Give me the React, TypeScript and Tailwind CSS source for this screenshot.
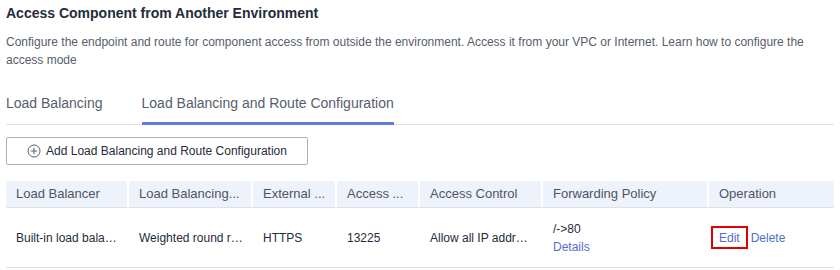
import { useState } from "react";

interface Row {
    balancer: string
    algorithm: string
    protocol: string
    port: string
    control: string
    policy: string
}

const columns = [
    { label: "Load Balancer", width: "w-[123px]" },
    { label: "Load Balancing...", width: "w-[124px]" },
    { label: "External ...", width: "w-[84px]" },
    { label: "Access ...", width: "w-[83px]" },
    { label: "Access Control", width: "w-[123px]" },
    { label: "Forwarding Policy", width: "w-[166px]" },
    { label: "Operation", width: "flex-1" },
];

const rows: Row[] = [
    {
        balancer: "Built-in load bala…",
        algorithm: "Weighted round r…",
        protocol: "HTTPS",
        port: "13225",
        control: "Allow all IP addr…",
        policy: "/->80",
    },
];

function PlusCircle() {
    return (
        <svg width="14" height="14" viewBox="0 0 14 14" fill="none" stroke="#575d6c" strokeWidth="1">
            <circle cx="7" cy="7" r="6" />
            <path d="M7 3.8v6.4M3.8 7h6.4" />
        </svg>
    );
}

export default function App() {
    const [tab, setTab] = useState(1);
    const tabs = ["Load Balancing", "Load Balancing and Route Configuration"];

    return (
        <div className="w-[840px] h-[270px] bg-white px-[6px] pt-[4px] font-['Liberation_Sans',Arial,sans-serif]">
            <h2 className="text-[14px] leading-[18px] font-bold text-[#252b3a]">
                Access Component from Another Environment
            </h2>
            <p className="mt-[11px] text-[12px] leading-[18px] text-[#575d6c] pr-[20px]">
                Configure the endpoint and route for component access from outside the environment. Access it from your VPC or Internet. Learn how to configure the access mode
            </p>

            <div className="mt-[25px] flex gap-[39px] border-b border-[#dfe1e6] w-[828px]">
                {tabs.map((t, i) => (
                    <button
                        key={t}
                        onClick={() => setTab(i)}
                        className={
                            "h-[31px] text-[14px] leading-[18px] text-[#575d6c] -mb-px pb-[10px] border-b-[3px] " +
                            (tab === i ? "border-[#5e7ce0]" : "border-transparent")
                        }
                    >
                        {t}
                    </button>
                ))}
            </div>

            <button className="mt-[12px] h-[28px] w-[302px] flex items-center justify-center gap-[5px] border border-[#adb0b8] rounded-[2px] text-[12px] text-[#252b3a]">
                <PlusCircle />
                Add Load Balancing and Route Configuration
            </button>

            <div className="mt-[16px] w-[828px]">
                <div className="flex h-[27px] bg-[#eef2fa] border-b border-[#dfe1e6]">
                    {columns.map((c, i) => (
                        <div
                            key={c.label}
                            className={
                                c.width +
                                " flex items-center px-[10px] whitespace-nowrap overflow-hidden text-[13px] text-[#4f5563] " +
                                (i < columns.length - 1 ? "border-r-2 border-white" : "")
                            }
                        >
                            {c.label}
                        </div>
                    ))}
                </div>
                {rows.map((r) => (
                    <div key={r.balancer} className="flex h-[60px] items-center border-b border-[#dfe1e6] text-[12px] text-[#252b3a] whitespace-nowrap">
                        <div className="w-[123px] px-[10px]">{r.balancer}</div>
                        <div className="w-[124px] px-[10px]">{r.algorithm}</div>
                        <div className="w-[84px] px-[10px]">{r.protocol}</div>
                        <div className="w-[83px] px-[10px]">{r.port}</div>
                        <div className="w-[123px] px-[10px]">{r.control}</div>
                        <div className="w-[166px] px-[10px] leading-[18px]">
                            <div>{r.policy}</div>
                            <div className="text-[#526ecc]">Details</div>
                        </div>
                        <div className="flex-1 pl-[2px] flex items-center gap-[3px] text-[#526ecc]">
                            <span className="h-[23px] px-[6px] flex items-center border-2 border-[#e00000]">Edit</span>
                            <span>Delete</span>
                        </div>
                    </div>
                ))}
            </div>
        </div>
    );
}
